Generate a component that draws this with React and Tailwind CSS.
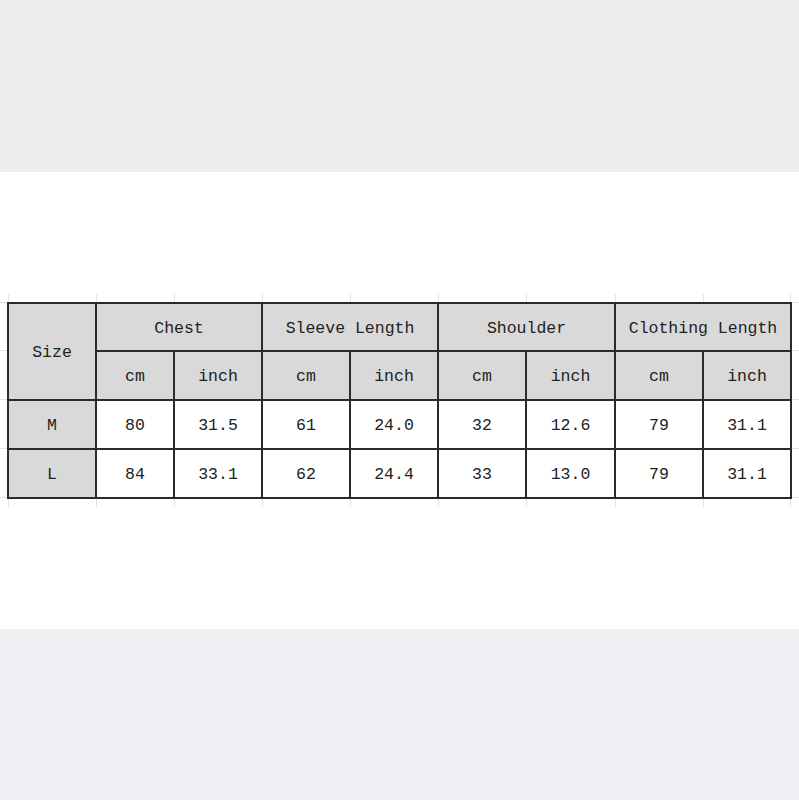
const cols = [88, 78, 88, 88, 88, 88, 89, 88, 88];
const rowLines = [48, 49, 49, 49];

const data = [
  ['M', '80', '31.5', '61', '24.0', '32', '12.6', '79', '31.1'],
  ['L', '84', '33.1', '62', '24.4', '33', '13.0', '79', '31.1'],
];

const groups = ['Chest', 'Sleeve Length', 'Shoulder', 'Clothing Length'];

function TickRow() {
  return (
    <div className="flex h-[8px] pl-[8px]">
      {cols.map((w, i) => (
        <div
          key={i}
          style={{ width: w }}
          className={`h-full border-l border-[#e2e2e2] ${i === cols.length - 1 ? 'border-r' : ''}`}
        />
      ))}
    </div>
  );
}

function SideTicks() {
  return (
    <div className="flex w-[7px] flex-col">
      {rowLines.map((h, i) => (
        <div key={i} style={{ height: h }} className="border-t border-[#e2e2e2]" />
      ))}
      <div className="border-t border-[#e2e2e2]" />
    </div>
  );
}

export default function App() {
  const cell = 'flex items-center justify-center pt-[4px] text-[16.5px] text-[#222]';
  return (
    <div className="w-[799px] h-[800px] flex flex-col" style={{ fontFamily: '"Liberation Mono", "DejaVu Sans Mono", monospace' }}>
      <div className="h-[172px] bg-[#ededef]" />
      <div className="h-[457px] bg-white pt-[122px]">
        <TickRow />
        <div className="flex">
          <SideTicks />
          <div className="grid border-2 border-[#2b2b2b] bg-[#2b2b2b] gap-[2px] grid-cols-[86px_76px_86px_86px_86px_86px_87px_86px_86px] grid-rows-[46px_47px_47px_47px]">
            <div className={`${cell} row-span-2 bg-[#d9d9d9]`}>Size</div>
            {groups.map((g) => (
              <div key={g} className={`${cell} col-span-2 bg-[#d9d9d9]`}>{g}</div>
            ))}
            {groups.map((g) => [
              <div key={g + 'cm'} className={`${cell} bg-[#d9d9d9]`}>cm</div>,
              <div key={g + 'in'} className={`${cell} bg-[#d9d9d9]`}>inch</div>,
            ])}
            {data.map((row) =>
              row.map((v, j) => (
                <div key={row[0] + j} className={`${cell} ${j === 0 ? 'bg-[#d9d9d9]' : 'bg-white'}`}>{v}</div>
              ))
            )}
          </div>
          <SideTicks />
        </div>
        <TickRow />
      </div>
      <div className="h-[171px] bg-[#f1eff3]" />
    </div>
  );
}
